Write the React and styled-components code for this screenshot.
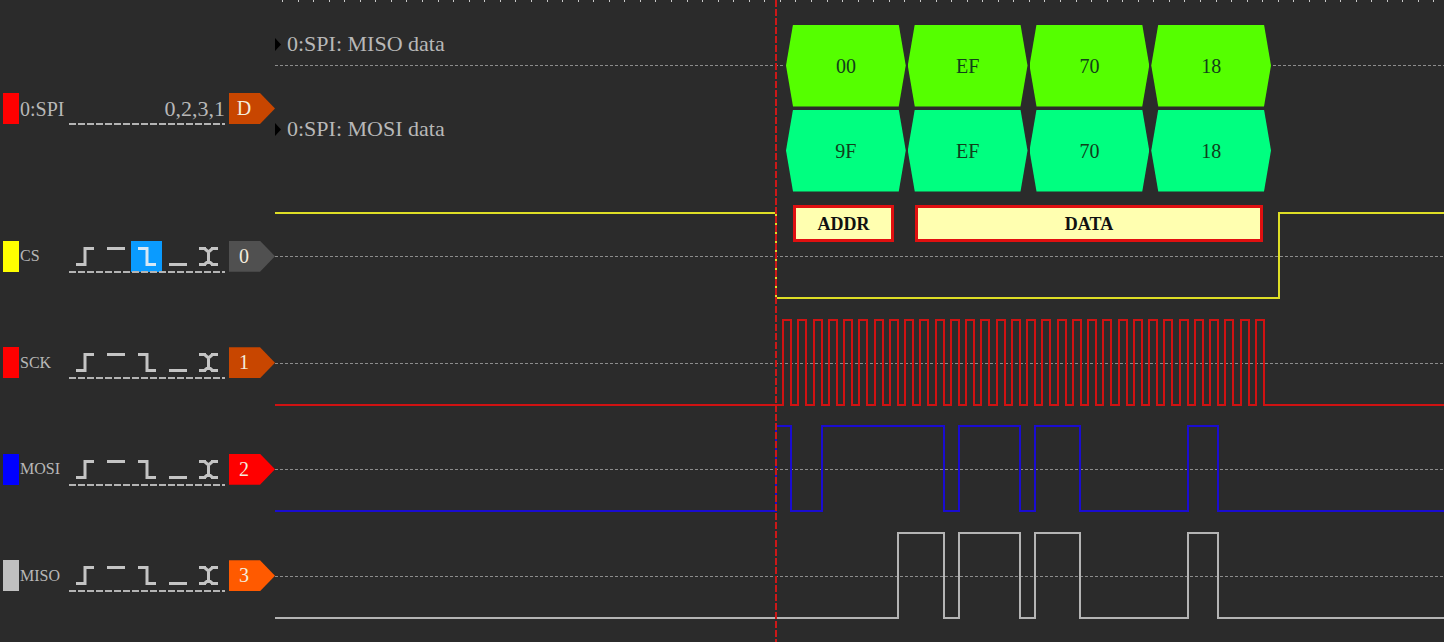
import React from "react";
import styled, { createGlobalStyle } from "styled-components";

const GlobalStyle = createGlobalStyle`
  * { box-sizing: border-box; }
  body {
    margin: 0;
    background: #2b2b2b;
    color: #b8b8b8;
    font-family: "Liberation Serif", "Times New Roman", serif;
  }
`;

const Page = styled.main`
  position: relative;
  display: grid;
  grid-template-rows: 203px repeat(4, minmax(106px, 1fr));
  min-height: 100vh;
  padding-bottom: 13px;
  overflow: hidden;
`;

const Row = styled.section`
  display: grid;
  grid-template-columns: 275px minmax(0, 1fr);
  min-width: 0;
`;

const Header = styled.div`
  display: flex;
  align-items: ${(p) => (p.$decoder ? "flex-start" : "center")};
  padding: ${(p) => (p.$decoder ? "93px 0 0 3px" : "0 0 0 3px")};
`;

const Swatch = styled.span`
  width: 16px;
  height: 31px;
  background: ${(p) => p.$color};
`;

const Name = styled.span`
  width: 50px;
  padding-left: 1px;
  font-size: ${(p) => (p.$decoder ? 20 : 16)}px;
  line-height: 32px;
  white-space: nowrap;
`;

const Controls = styled.div`
  position: relative;
  display: flex;
  align-items: center;
  justify-content: ${(p) => (p.$end ? "flex-end" : "flex-start")};
  width: 156px;
  height: 31px;
  margin-right: 4px;
  font-size: 22px;
  line-height: 31px;

  &::after {
    content: "";
    position: absolute;
    left: 0;
    right: 0;
    bottom: -1px;
    height: 2px;
    background: repeating-linear-gradient(90deg, #b4b4b4 0 7px, transparent 7px 9px);
  }
`;

const TriggerButton = styled.button`
  display: grid;
  place-items: center;
  width: 31px;
  height: 31px;
  padding: 0;
  border: 0;
  color: ${(p) => (p.$active ? "#d6e8f6" : "#c4c4c4")};
  background: ${(p) => (p.$active ? "#0a9bff" : "transparent")};
`;

const Tag = styled.button`
  width: 46px;
  height: 31px;
  padding: 0 16px 0 0;
  border: 0;
  color: #f4ecdc;
  background: ${(p) => p.$color};
  clip-path: polygon(0 0, 31px 0, 100% 50%, 31px 100%, 0 100%);
  font: 20px/31px "Liberation Serif", serif;
  text-align: center;
`;

const Canvas = styled.div`
  position: relative;
  display: flex;
  align-items: center;
  min-width: 0;
`;

const TraceSvg = styled.svg`
  display: block;
  width: 100%;
  height: 88px;
`;

const Decoder = styled.div`
  min-width: 0;
  overflow: hidden;
`;

const RulerSvg = styled.svg`
  display: block;
  width: 100%;
  height: 23px;
`;

const Lane = styled.div`
  display: grid;
  grid-template-columns: 511px 485px minmax(0, 1fr);
  height: 85px;
`;

const LaneLabel = styled.div`
  display: flex;
  align-items: center;
  gap: 6px;
  height: 42px;
  font-size: 22px;
  white-space: nowrap;
`;

const Baseline = styled.div`
  height: 1px;
  margin: ${(p) => (p.$after ? "42px 0 0 2px" : "0 2px 0 0")};
  background: repeating-linear-gradient(90deg, #8c8c8c 0 3px, transparent 3px 5px);
`;

const Frames = styled.div`
  display: flex;
  align-items: center;
  gap: 2px;
`;

const Frame = styled.div`
  flex: 1;
  height: 82px;
  color: #10401a;
  background: ${(p) => p.$color};
  clip-path: polygon(0 50%, 7px 0, calc(100% - 7px) 0, 100% 50%, calc(100% - 7px) 100%, 7px 100%);
  font-size: 20px;
  line-height: 82px;
  text-align: center;
`;

const Note = styled.div`
  position: absolute;
  top: 2px;
  left: ${(p) => p.$left}px;
  width: ${(p) => p.$width}px;
  height: 37px;
  border: 3px solid #e01010;
  color: #111;
  background: #ffffb0;
  font-size: 18px;
  font-weight: bold;
  line-height: 33px;
  text-align: center;
`;

const Cursor = styled.div`
  position: absolute;
  top: 0;
  bottom: 0;
  left: 775px;
  width: 2px;
  background: repeating-linear-gradient(180deg, #cc1818 0 7px, transparent 7px 9px);
`;

const TRIGGERS = [
  ["Rising edge", "M7 23.5H16V7.5H25"],
  ["High level", "M7 7.5H25"],
  ["Falling edge", "M7 7.5H16V23.5H25"],
  ["Low level", "M7 23.5H25"],
  ["Either edge", "M6 7.5H13M18 7.5H25M6 23.5H13M18 23.5H25M12 8L15.5 11L19 8M15.5 10V21M12 23L15.5 20L19 23"],
];

function TriggerIcon({ d }) {
  return (
    <svg width="31" height="31" viewBox="0 0 31 31" fill="none" stroke="currentColor" strokeWidth="3" aria-hidden="true">
      <path d={d} />
    </svg>
  );
}

// Builds a logic trace: the level flips at each edge, starting from `high`.
function tracePath(edges, high) {
  let y = high ? 1 : 86;
  let d = `M0 ${y}`;
  edges.forEach((x) => {
    y = y === 1 ? 86 : 1;
    d += `H${x}V${y}`;
  });
  return `${d}H6000`;
}

const CLOCK_EDGES = Array.from({ length: 32 }, (_, i) => {
  const rise = Math.round(508.2 + i * 15.25);
  return [rise, rise + 8];
}).flat();

const CHANNELS = [
  { name: "CS", id: "0", color: "#ffff00", line: "#dede26", tag: "#505050", active: 2, high: true, edges: [501, 1004] },
  { name: "SCK", id: "1", color: "#ff0000", line: "#d01212", tag: "#c84600", edges: CLOCK_EDGES },
  { name: "MOSI", id: "2", color: "#0000ff", line: "#1a0cd0", tag: "#ff0000", edges: [501, 516, 547, 669, 684, 745, 760, 805, 913, 943] },
  { name: "MISO", id: "3", color: "#c0c0c0", line: "#b4b4b4", tag: "#ff5a00", edges: [623, 669, 684, 745, 760, 805, 913, 943] },
];

const LANES = [
  { label: "0:SPI: MISO data", color: "#55ff00", values: ["00", "EF", "70", "18"], baseline: true },
  { label: "0:SPI: MOSI data", color: "#00ff80", values: ["9F", "EF", "70", "18"] },
];

const NOTES = [
  { text: "ADDR", left: 518, width: 101 },
  { text: "DATA", left: 640, width: 348 },
];

function ChannelRow({ channel, children }) {
  return (
    <Row>
      <Header>
        <Swatch $color={channel.color} />
        <Name>{channel.name}</Name>
        <Controls>
          {TRIGGERS.map(([label, d], i) => (
            <TriggerButton key={label} type="button" aria-label={label} $active={channel.active === i}>
              <TriggerIcon d={d} />
            </TriggerButton>
          ))}
        </Controls>
        <Tag type="button" $color={channel.tag}>{channel.id}</Tag>
      </Header>
      <Canvas>
        <TraceSvg shapeRendering="crispEdges" fill="none" aria-hidden="true">
          <path d="M0 44.5H6000" stroke="#8c8c8c" strokeDasharray="3 2" />
          <path d={tracePath(channel.edges, channel.high)} stroke={channel.line} strokeWidth="2" />
        </TraceSvg>
        {children}
      </Canvas>
    </Row>
  );
}

export default function App() {
  return (
    <>
      <GlobalStyle />
      <Page>
        <Row>
          <Header $decoder>
            <Swatch $color="#ff0000" />
            <Name $decoder>0:SPI</Name>
            <Controls $end>0,2,3,1</Controls>
            <Tag type="button" $color="#c84600">D</Tag>
          </Header>
          <Decoder>
            <RulerSvg shapeRendering="crispEdges" aria-hidden="true">
              {Array.from({ length: 240 }, (_, i) => (
                <rect key={i} x={Math.round(7 + i * 15.56)} y="0" width="1" height="2" fill="#c8c8c8" />
              ))}
            </RulerSvg>
            {LANES.map((lane) => (
              <Lane key={lane.label}>
                <div>
                  <LaneLabel>
                    <svg width="6" height="13" viewBox="0 0 6 13" aria-hidden="true">
                      <path d="M0 0L6 6.5L0 13Z" fill="#000" />
                    </svg>
                    {lane.label}
                  </LaneLabel>
                  {lane.baseline && <Baseline />}
                </div>
                <Frames>
                  {lane.values.map((value, i) => (
                    <Frame key={i} $color={lane.color}>{value}</Frame>
                  ))}
                </Frames>
                {lane.baseline && <Baseline $after />}
              </Lane>
            ))}
          </Decoder>
        </Row>
        {CHANNELS.map((channel) => (
          <ChannelRow key={channel.name} channel={channel}>
            {channel.name === "CS" &&
              NOTES.map((note) => (
                <Note key={note.text} $left={note.left} $width={note.width}>{note.text}</Note>
              ))}
          </ChannelRow>
        ))}
        <Cursor />
      </Page>
    </>
  );
}
